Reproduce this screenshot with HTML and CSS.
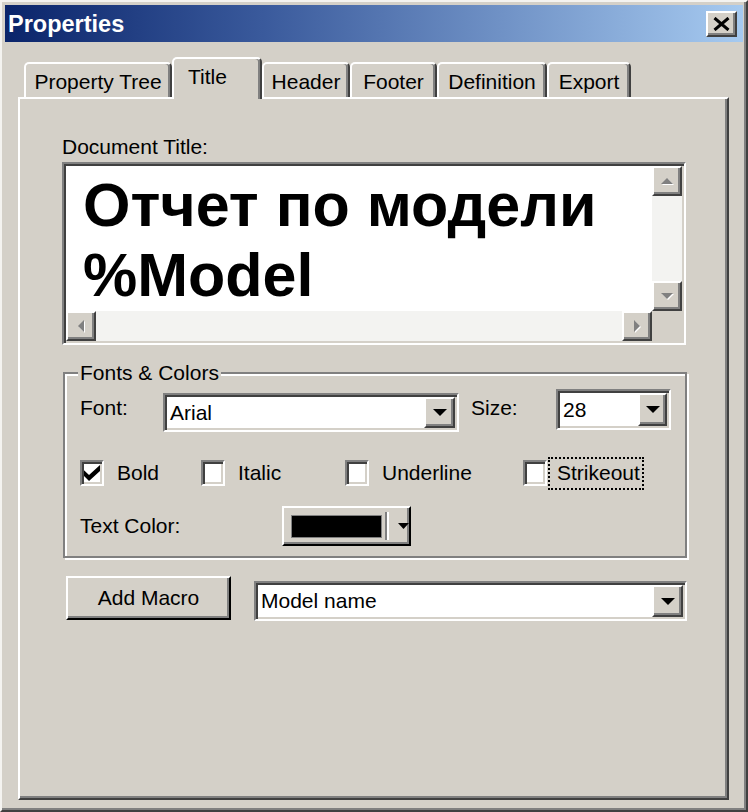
FILE: index.html
```html
<!DOCTYPE html>
<html>
<head>
<meta charset="utf-8">
<link rel="stylesheet" href="styles.css">
</head>
<body>
<div class="window">
  <div class="titlebar">
    <span class="title">Properties</span>
    <div class="close raised">
      <svg width="17" height="14" viewBox="0 0 17 14"><path d="M1.5 1 L15.5 13 M15.5 1 L1.5 13" stroke="#000" stroke-width="3"/></svg>
    </div>
  </div>
  <div class="body">
    <div class="tabs">
      <div class="tab t1">Property Tree</div>
      <div class="tab active t2">Title</div>
      <div class="tab t3">Header</div>
      <div class="tab t4">Footer</div>
      <div class="tab t5">Definition</div>
      <div class="tab t6">Export</div>
    </div>
    <div class="panel">
      <div class="doc-label">Document Title:</div>
      <div class="textbox">
        <div class="text-area">Отчет по модели<br>%Model</div>
        <div class="vscroll">
          <div class="sbtn raised"><svg width="14" height="8" viewBox="0 0 14 8"><path d="M1 7H13L7 1Z" fill="#fff" transform="translate(1,1)"/><path d="M1 7H13L7 1Z" fill="#808080"/></svg></div>
          <div class="track"></div>
          <div class="sbtn raised"><svg width="14" height="8" viewBox="0 0 14 8"><path d="M1 1H13L7 7Z" fill="#fff" transform="translate(1,1)"/><path d="M1 1H13L7 7Z" fill="#808080"/></svg></div>
        </div>
        <div class="hscroll">
          <div class="sbtn raised"><svg width="8" height="14" viewBox="0 0 8 14"><path d="M7 1V13L1 7Z" fill="#fff" transform="translate(1,1)"/><path d="M7 1V13L1 7Z" fill="#808080"/></svg></div>
          <div class="track"></div>
          <div class="sbtn raised"><svg width="8" height="14" viewBox="0 0 8 14"><path d="M1 1V13L7 7Z" fill="#fff" transform="translate(1,1)"/><path d="M1 1V13L7 7Z" fill="#808080"/></svg></div>
        </div>
        <div class="corner"></div>
      </div>

      <div class="group">
        <div class="legend">Fonts &amp; Colors</div>
        <div class="row1">
          <div class="lbl lbl-font">Font:</div>
          <div class="combo combo-font">
            <div class="combo-value">Arial</div>
            <div class="ddbtn raised"><svg width="14" height="7" viewBox="0 0 14 7"><path d="M0 0H14L7 7Z"/></svg></div>
          </div>
          <div class="lbl lbl-size">Size:</div>
          <div class="combo combo-size">
            <div class="combo-value">28</div>
            <div class="ddbtn raised"><svg width="14" height="7" viewBox="0 0 14 7"><path d="M0 0H14L7 7Z"/></svg></div>
          </div>
        </div>
        <div class="row2">
          <div class="chk-item w-bold">
            <div class="chk"><svg width="16" height="16" viewBox="0 0 7 7"><path d="M0 2.3 L2.2 4.4 L7 0 V2.6 L2.2 7 L0 4.8Z"/></svg></div>
            <span>Bold</span>
          </div>
          <div class="chk-item w-italic">
            <div class="chk"></div>
            <span>Italic</span>
          </div>
          <div class="chk-item w-under">
            <div class="chk"></div>
            <span>Underline</span>
          </div>
          <div class="chk-item w-strike">
            <div class="chk"></div>
            <span class="focus">Strikeout</span>
          </div>
        </div>
        <div class="row3">
          <div class="lbl-color">Text Color:</div>
          <div class="colorbtn">
            <div class="swatch"></div>
            <div class="sep"></div>
            <svg width="11" height="6" viewBox="0 0 11 6"><path d="M0 0H11L5.5 6Z"/></svg>
          </div>
        </div>
      </div>

      <div class="macro-row">
        <div class="btn">Add Macro</div>
        <div class="combo combo-model">
          <div class="combo-value">Model name</div>
          <div class="ddbtn raised"><svg width="14" height="7" viewBox="0 0 14 7"><path d="M0 0H14L7 7Z"/></svg></div>
        </div>
      </div>
    </div>
  </div>
</div>
</body>
</html>
```

FILE: styles.css
```css
* { box-sizing: border-box; }
html, body { margin: 0; padding: 0; }
body {
  background: #d4d0c8;
  font-family: "Liberation Sans", Arial, sans-serif;
  font-size: 21px;
  color: #000;
}

.raised {
  background: #d4d0c8;
  border: 2px solid;
  border-color: #fff #404040 #404040 #fff;
  box-shadow: inset -2px -2px 0 #808080;
}

.window {
  width: 748px;
  height: 812px;
  border: 2px solid;
  border-color: #f4f3f0 #404040 #404040 #f4f3f0;
  box-shadow: inset -2px -2px 0 #808080;
  padding: 3px;
  background: #d4d0c8;
  display: flex;
  flex-direction: column;
}

.titlebar {
  height: 37px;
  flex: none;
  display: flex;
  align-items: center;
  justify-content: space-between;
  padding: 0 6px 0 3px;
  background: linear-gradient(to right, #0a246a 0%, #3a5a9c 35%, #a6caf0 100%);
}
.title {
  color: #fff;
  font-weight: bold;
  font-size: 23.5px;
  line-height: 26px;
}
.close {
  width: 31px;
  height: 26px;
  display: flex;
  align-items: center;
  justify-content: center;
}

.body {
  flex: 1;
  display: flex;
  flex-direction: column;
  padding: 15px 14px 7px 13px;
}

.tabs {
  height: 40px;
  flex: none;
  display: flex;
  align-items: flex-end;
  padding-left: 6px;
}
.tab {
  height: 35px;
  border: 2px solid;
  border-bottom: 0;
  border-color: #fff #404040 transparent #fff;
  border-radius: 5px 5px 0 0;
  box-shadow: inset -2px 0 0 #808080;
  display: flex;
  align-items: center;
  justify-content: center;
  padding-top: 2px;
  line-height: 24px;
  white-space: nowrap;
  background: #d4d0c8;
}
.tab.active {
  height: 42px;
  margin-bottom: -2px;
  position: relative;
  z-index: 1;
  justify-content: flex-start;
  padding: 0 0 4px 14px;
}
.t1 { width: 148px; }
.t2 { width: 90px; }
.t3 { width: 88px; }
.t4 { width: 87px; }
.t5 { width: 110px; }
.t6 { width: 84px; }

.panel {
  flex: 1;
  border: 2px solid;
  border-color: #fff #404040 #404040 #fff;
  box-shadow: inset -2px -2px 0 #808080;
  padding: 36px 40px 0 42px;
}

.doc-label { line-height: 24px; }

.textbox {
  margin-top: 3px;
  width: 624px;
  height: 183px;
  border: 2px solid;
  border-color: #808080 #fff #fff #808080;
  padding: 2px;
  box-shadow: inset 2px 2px 0 #404040, inset -2px -2px 0 #d4d0c8;
  display: grid;
  grid-template-columns: 1fr 30px;
  grid-template-rows: 1fr 30px;
}
.text-area {
  background: #fff;
  padding: 4px 0 0 17px;
  font-weight: bold;
  font-size: 61px;
  line-height: 70px;
  overflow: hidden;
  white-space: nowrap;
}
.vscroll { display: flex; flex-direction: column; }
.hscroll { display: flex; }
.track { flex: 1; background: #f3f3f1; }
.sbtn {
  width: 30px;
  height: 30px;
  flex: none;
  display: flex;
  align-items: center;
  justify-content: center;
}
.corner { background: #d4d0c8; }

.group {
  margin: 27px 0 0 1px;
  width: 624px;
  border: 2px solid #808080;
  box-shadow: inset 2px 2px 0 #fff, 2px 2px 0 #fff;
  padding: 0 14px 10px 15px;
}
.legend {
  width: fit-content;
  margin: -13px 0 0 -2px;
  padding: 0 2px;
  background: #d4d0c8;
  line-height: 24px;
}

.row1 {
  margin-top: 4px;
  display: flex;
  align-items: flex-start;
}
.lbl { line-height: 24px; margin-top: 7px; flex: none; }
.lbl-font { width: 83px; }
.lbl-size { width: 85px; margin-left: 12px; }

.combo {
  display: flex;
  flex: none;
  border: 2px solid;
  border-color: #808080 #fff #fff #808080;
  padding: 2px;
  box-shadow: inset 2px 2px 0 #404040, inset -2px -2px 0 #d4d0c8;
}
.combo-value {
  flex: 1;
  background: #fff;
  padding-left: 3px;
  display: flex;
  align-items: center;
  line-height: 24px;
  white-space: nowrap;
}
.ddbtn {
  width: 31px;
  flex: none;
  display: flex;
  align-items: center;
  justify-content: center;
}
.combo-font { width: 296px; height: 39px; margin-top: 4px; }
.combo-size { width: 115px; height: 41px; }
.combo-size .ddbtn { width: 29px; }

.row2 {
  margin-top: 28px;
  height: 26px;
  display: flex;
  align-items: center;
}
.chk-item { display: flex; align-items: center; flex: none; line-height: 24px; }
.w-bold { width: 121px; }
.w-italic { width: 144px; }
.w-under { width: 178px; }
.chk {
  width: 24px;
  height: 26px;
  flex: none;
  margin-right: 13px;
  border: 2px solid;
  border-color: #808080 #fff #fff #808080;
  box-shadow: inset 2px 2px 0 #404040, inset -2px -2px 0 #d4d0c8;
  background: #fff;
  display: flex;
  align-items: center;
  justify-content: center;
}
.w-strike .chk { margin-right: 1px; }
.focus {
  border: 2px dotted #000;
  padding: 2px 2px 3px 7px;
  line-height: 24px;
}

.row3 {
  margin-top: 20px;
  display: flex;
  align-items: center;
}
.lbl-color { width: 202px; line-height: 24px; }
.colorbtn {
  width: 129px;
  height: 40px;
  display: flex;
  align-items: center;
  padding-left: 7px;
  background: #d4d0c8;
  border: 2px solid;
  border-color: #fff #000 #000 #fff;
  box-shadow: inset -2px -2px 0 #808080;
}
.swatch {
  width: 91px;
  height: 23px;
  background: #000;
  border: 1px solid #808080;
}
.sep {
  width: 4px;
  height: 28px;
  margin-left: 3px;
  border-left: 2px solid #808080;
  border-right: 2px solid #fff;
}
.colorbtn svg { margin-left: 9px; }

.macro-row {
  margin: 18px 0 0 4px;
  display: flex;
  align-items: flex-start;
}
.btn {
  width: 165px;
  height: 44px;
  flex: none;
  display: flex;
  align-items: center;
  justify-content: center;
  background: #d4d0c8;
  border: 2px solid;
  border-color: #fff #000 #000 #fff;
  box-shadow: inset -2px -2px 0 #808080;
  line-height: 24px;
}
.combo-model { width: 433px; height: 40px; margin: 5px 0 0 23px; }
```
